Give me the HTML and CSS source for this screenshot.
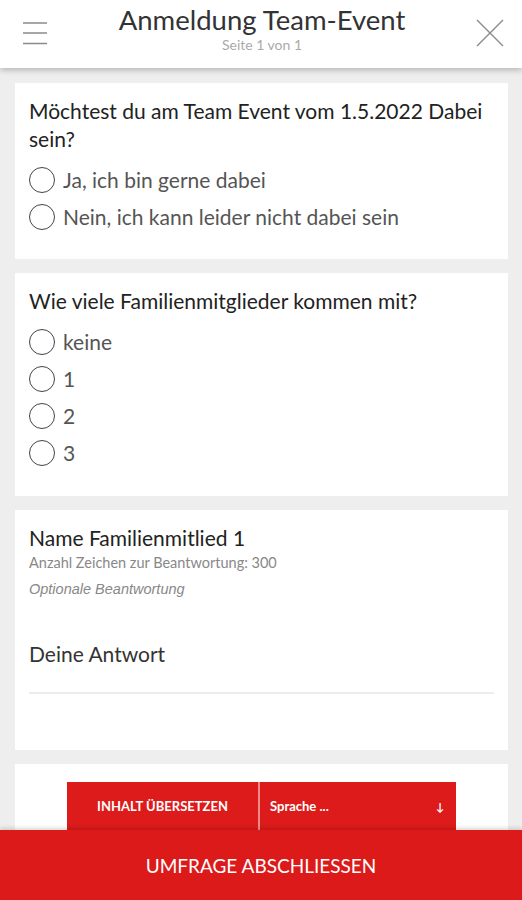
FILE: index.html
```html
<!DOCTYPE html>
<html lang="de">
<head>
    <meta charset="UTF-8">
    <meta name="viewport" content="width=device-width, initial-scale=1.0">
    <title>Anmeldung Team-Event</title>
    <link rel="stylesheet" href="styles.css">
</head>
<body>
    <header class="topbar">
        <button class="icon-button" aria-label="Menü">
            <svg width="26" height="26" viewBox="0 0 26 26">
                <path d="M1 4h24M1 14h24M1 24.5h24" stroke="#8a8a8a" stroke-width="1.6" fill="none"/>
            </svg>
        </button>
        <div class="title">
            <h1>Anmeldung Team-Event</h1>
            <span class="subtitle">Seite 1 von 1</span>
        </div>
        <button class="icon-button" aria-label="Schließen">
            <svg width="28" height="28" viewBox="0 0 28 28">
                <path d="M1 1L27 27M27 1L1 27" stroke="#8a8a8a" stroke-width="1.4" fill="none"/>
            </svg>
        </button>
    </header>

    <main class="content">
        <section class="card">
            <p class="question">Möchtest du am Team Event vom 1.5.2022 Dabei sein?</p>
            <label class="option"><span class="radio"></span>Ja, ich bin gerne dabei</label>
            <label class="option"><span class="radio"></span>Nein, ich kann leider nicht dabei sein</label>
        </section>

        <section class="card card-second">
            <p class="question">Wie viele Familienmitglieder kommen mit?</p>
            <label class="option"><span class="radio"></span>keine</label>
            <label class="option"><span class="radio"></span>1</label>
            <label class="option"><span class="radio"></span>2</label>
            <label class="option"><span class="radio"></span>3</label>
        </section>

        <section class="card card-text">
            <p class="question">Name Familienmitlied 1</p>
            <p class="hint">Anzahl Zeichen zur Beantwortung: 300</p>
            <p class="hint optional">Optionale Beantwortung</p>
            <div class="answer">Deine Antwort</div>
        </section>

        <section class="card card-empty"></section>
    </main>

    <div class="translate">
        <button class="translate-button">INHALT ÜBERSETZEN</button>
        <div class="language">
            <span>Sprache ...</span>
            <span class="arrow">↓</span>
        </div>
    </div>

    <footer class="submit">UMFRAGE ABSCHLIESSEN</footer>
</body>
</html>
```

FILE: styles.css
```css
html, body {
    margin: 0;
    padding: 0;
    height: 900px;
    overflow: hidden;
}
body {
    font-family: Lato, "Noto Sans", sans-serif;
    background-color: #eeeeee;
    color: #222;
    display: flex;
    flex-direction: column;
    position: relative;
}
.topbar {
    height: 68px;
    flex-shrink: 0;
    background-color: #fff;
    box-shadow: 0 2px 6px rgba(0, 0, 0, 0.25);
    display: flex;
    align-items: flex-start;
    justify-content: space-between;
    padding: 0 18px 0 22px;
    position: relative;
    z-index: 2;
}
.icon-button {
    background: none;
    border: none;
    padding: 0;
    margin-top: 19px;
    cursor: pointer;
}
.title {
    text-align: center;
    padding-top: 4px;
}
.title h1 {
    margin: 0;
    font-size: 27.5px;
    font-weight: 400;
    line-height: 32px;
    color: #333;
}
.subtitle {
    display: block;
    font-size: 14px;
    color: #aaa;
    line-height: 18px;
}
.content {
    flex: 1;
    overflow: hidden;
    padding: 15px 14px 0 15px;
    display: flex;
    flex-direction: column;
    gap: 14px;
}
.card {
    background-color: #fff;
    padding: 14px 14px 24px 14px;
    flex-shrink: 0;
}
.question {
    margin: 0 0 8px 0;
    font-size: 21px;
    line-height: 28px;
    color: #222;
}
.option {
    display: flex;
    align-items: center;
    gap: 8px;
    font-size: 21px;
    line-height: 37px;
    height: 37px;
    color: #555;
}
.radio {
    width: 24px;
    height: 24px;
    border: 1.5px solid #444;
    border-radius: 50%;
    flex-shrink: 0;
}
.card-second {
    padding-bottom: 25px;
}
.card-text {
    padding-bottom: 56px;
}
.card-text .question {
    margin-bottom: 2px;
}
.hint {
    margin: 0 0 8px 0;
    font-size: 14.5px;
    line-height: 18px;
    color: #888;
}
.optional {
    font-style: italic;
    font-family: "Liberation Sans", sans-serif;
    font-size: 14.5px;
}
.answer {
    margin-top: 43px;
    padding-bottom: 26px;
    font-size: 21px;
    color: #333;
    border-bottom: 2px solid #ededed;
}
.card-empty {
    height: 120px;
}
.translate {
    position: absolute;
    left: 67px;
    top: 782px;
    width: 389px;
    height: 48px;
    display: flex;
    background-color: #dd1b1b;
    z-index: 3;
}
.translate-button {
    width: 193px;
    border: none;
    border-right: 2px solid #f08a8a;
    background-color: #dd1b1b;
    color: #fff;
    font-family: Lato, sans-serif;
    font-weight: 700;
    font-size: 13px;
    padding: 0;
}
.language {
    flex: 1;
    display: flex;
    justify-content: space-between;
    align-items: center;
    padding: 0 12px 0 10px;
    color: #fff;
    font-size: 13px;
    font-weight: 700;
}
.arrow {
    font-size: 11px;
}
.submit {
    height: 70px;
    flex-shrink: 0;
    background-color: #dc1a1a;
    color: #fff;
    font-size: 19px;
    display: flex;
    align-items: center;
    justify-content: center;
    position: relative;
    z-index: 3;
    box-shadow: 0 -2px 4px rgba(0, 0, 0, 0.15);
}
```
